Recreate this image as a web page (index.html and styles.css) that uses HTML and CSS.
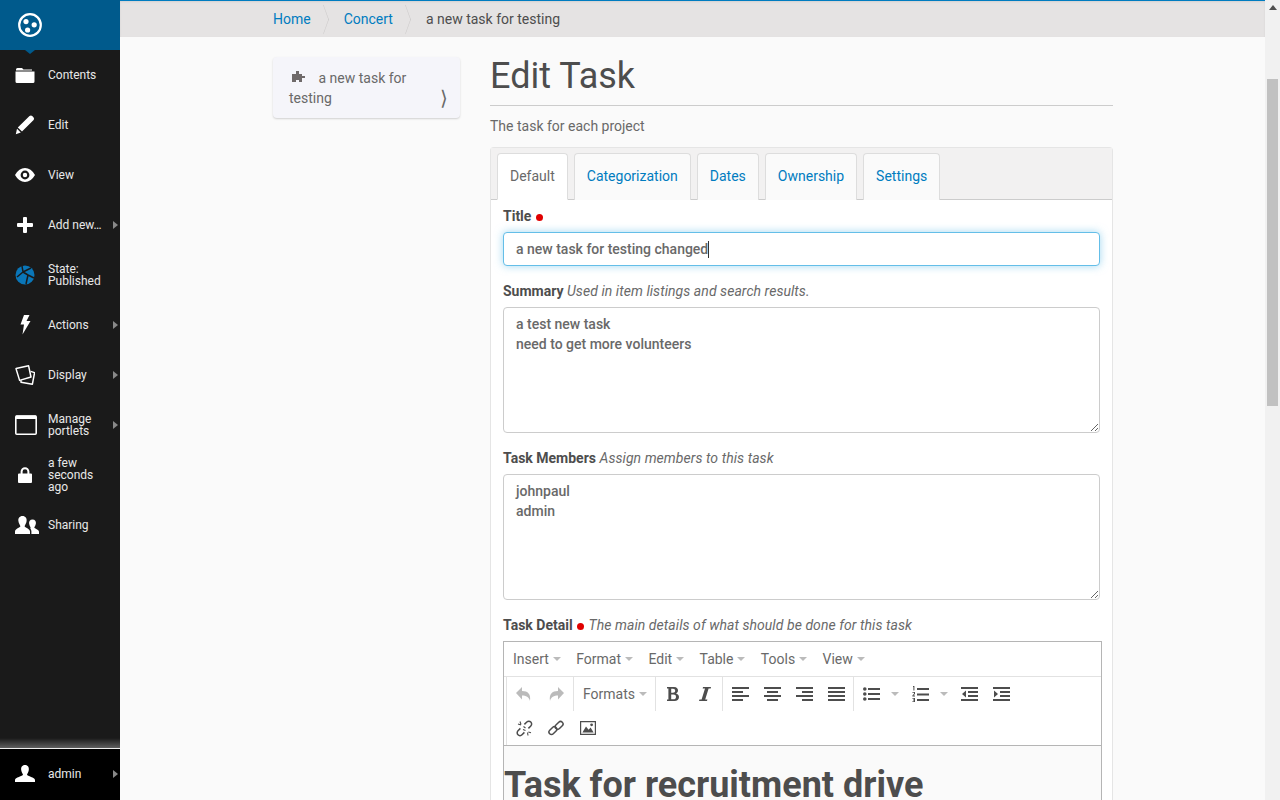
FILE: index.html

```html
<!DOCTYPE html>
<html lang="en">
<head>
    <meta charset="UTF-8">
    <meta name="viewport" content="width=device-width, initial-scale=1.0">
    <title>Edit Task</title>
    <link rel="stylesheet" href="styles.css">
</head>
<body>
    <!-- Toolbar -->
    <nav class="toolbar">
        <a class="logo" href="#">
            <svg width="24" height="24" viewBox="0 0 24 24"><circle cx="12" cy="12" r="10.8" fill="none" stroke="#fff" stroke-width="2.2"/><circle cx="8" cy="8.6" r="2.6" fill="#fff"/><circle cx="16.2" cy="11.8" r="2.6" fill="#fff"/><circle cx="9.6" cy="17" r="2.6" fill="#fff"/></svg>
        </a>
        <ul class="toolbar-items">
            <li><a href="#"><span class="tool-icon"><svg width="20" height="16" viewBox="0 0 20 16"><path d="M1 2.5 Q1 1 2.5 1 H7 L8.5 2.5 H17 V3.5 H1Z M0.5 4.6 H19.5 V14.5 Q19.5 16 18 16 H2 Q0.5 16 0.5 14.5Z" fill="#fff"/></svg></span><span class="tool-label">Contents</span></a></li>
            <li><a href="#"><span class="tool-icon"><svg width="20" height="20" viewBox="0 0 20 20"><path d="M14.5 1 Q16 0 17.5 1.2 L18.6 2.4 Q19.6 3.8 18.6 5 L7 16.6 2.8 12.6Z M2 13.8 L5.8 17.6 0.8 19.2Z" fill="#fff"/></svg></span><span class="tool-label">Edit</span></a></li>
            <li><a href="#"><span class="tool-icon"><svg width="20" height="14" viewBox="0 0 20 14"><path fill-rule="evenodd" d="M0 7 Q4 0 10 0 T20 7 Q16 14 10 14 T0 7Z M10 2.6 A4.4 4.4 0 1 0 10 11.4 A4.4 4.4 0 1 0 10 2.6Z M10 4.8 A2.2 2.2 0 1 1 10 9.2 A2.2 2.2 0 1 1 10 4.8Z" fill="#fff"/></svg></span><span class="tool-label">View</span></a></li>
            <li class="has-sub"><a href="#"><span class="tool-icon"><svg width="16" height="16" viewBox="0 0 16 16"><path d="M6 1 Q6 0 7 0 H9 Q10 0 10 1 V6 H15 Q16 6 16 7 V9 Q16 10 15 10 H10 V15 Q10 16 9 16 H7 Q6 16 6 15 V10 H1 Q0 10 0 9 V7 Q0 6 1 6 H6Z" fill="#fff"/></svg></span><span class="tool-label">Add new…</span></a></li>
            <li><a href="#"><span class="tool-icon"><svg width="20" height="20" viewBox="0 0 20 20"><circle cx="10" cy="10" r="9.5" fill="#0a76b8"/><path d="M7 1 L8 7 2 12 M8 7 L13 10 19 13 M13 10 L11 19 M8 7 L16 3" fill="none" stroke="#1a1a1a" stroke-width="1.5"/></svg></span><span class="tool-label">State:<br>Published</span></a></li>
            <li class="has-sub"><a href="#"><span class="tool-icon"><svg width="12" height="20" viewBox="0 0 12 20"><path d="M5 0 H10.5 L7.5 6 H11.5 L3.5 19.5 5 9.5 H1.5Z" fill="#fff"/></svg></span><span class="tool-label">Actions</span></a></li>
            <li class="has-sub"><a href="#"><span class="tool-icon"><svg width="20" height="20" viewBox="0 0 20 20"><path d="M1 3.6 L13.6 0.8 16 12 4.6 15.4Z" fill="none" stroke="#fff" stroke-width="1.5" stroke-linejoin="round"/><path d="M15.6 6.4 L19.6 7.6 17.4 19.2 6 17.2 6 15.2" fill="none" stroke="#fff" stroke-width="1.5" stroke-linejoin="round"/></svg></span><span class="tool-label">Display</span></a></li>
            <li class="has-sub"><a href="#"><span class="tool-icon icon-right"><svg width="22" height="20" viewBox="0 0 22 20"><rect x="0.8" y="1" width="20.4" height="18.2" rx="1" fill="none" stroke="#fff" stroke-width="1.6"/><rect x="0.8" y="0.5" width="20.4" height="3.5" fill="#fff"/></svg></span><span class="tool-label">Manage<br>portlets</span></a></li>
            <li><a href="#"><span class="tool-icon"><svg width="14" height="16" viewBox="0 0 14 16"><path fill-rule="evenodd" d="M2.6 6.5 V4.6 A4.4 4.4 0 0 1 11.4 4.6 V6.5 H13 Q14 6.5 14 7.5 V15 Q14 16 13 16 H1 Q0 16 0 15 V7.5 Q0 6.5 1 6.5Z M4.6 6.5 H9.4 V4.6 A2.4 2.4 0 0 0 4.6 4.6Z" fill="#fff"/></svg></span><span class="tool-label">a few<br>seconds<br>ago</span></a></li>
            <li><a href="#"><span class="tool-icon icon-right-2"><svg width="24" height="18" viewBox="0 0 24 18"><path d="M7.5 0 C10.5 0 12 2.4 11.6 5 C11.3 7.5 10 9 9.6 10.2 C9.8 11.6 15 12.6 15 15.5 V18 H0 V15.5 C0 12.6 5.2 11.6 5.4 10.2 C5 9 3.7 7.5 3.4 5 C3 2.4 4.5 0 7.5 0Z" fill="#fff"/><path d="M17.5 3.5 C20 3.5 21.2 5.5 20.9 7.5 C20.6 9.5 19.6 10.7 19.3 11.6 C19.5 12.8 24 13.5 24 15.8 V18 H16.4 V15.2 C16.4 13.4 14.6 12.4 15.6 11.6 C15.2 10.7 14.4 9.5 14.1 7.5 C13.8 5.5 15 3.5 17.5 3.5Z" fill="#fff"/></svg></span><span class="tool-label">Sharing</span></a></li>
        </ul>
        <a class="toolbar-user has-sub" href="#"><span class="tool-icon"><svg width="20" height="17" viewBox="0 0 20 17"><path d="M10 0 C13 0 14.2 2.4 13.8 5 C13.5 7.2 12.4 8.6 12 9.8 C12.2 11.2 20 12.4 20 15 V17 H0 V15 C0 12.4 7.8 11.2 8 9.8 C7.6 8.6 6.5 7.2 6.2 5 C5.8 2.4 7 0 10 0Z" fill="#fff"/></svg></span><span class="tool-label">admin</span></a>
    </nav>

    <div class="page">
        <!-- Breadcrumbs -->
        <div class="breadcrumbs">
            <ol class="container crumb-list">
                <li><a href="#">Home</a></li>
                <li><a href="#">Concert</a></li>
                <li>a new task for testing</li>
            </ol>
        </div>

        <div class="container columns">
            <aside class="nav-card">
                <svg class="puzzle" width="13" height="12" viewBox="0 0 13 12"><path d="M4 0 H7 V3 H10 V5 H13 V7 H10 V11 H7 V9 H4 V11 H0 V3 H4Z" fill="#6f6a6a"/></svg>
                <span>a new task for testing</span>
                <span class="nav-arrow">⟩</span>
            </aside>

            <main class="content">
                <h1>Edit Task</h1>
                <p class="lead">The task for each project</p>

                <form class="edit-form">
                    <div class="tabs">
                        <a class="tab active" href="#">Default</a>
                        <a class="tab" href="#">Categorization</a>
                        <a class="tab" href="#">Dates</a>
                        <a class="tab" href="#">Ownership</a>
                        <a class="tab" href="#">Settings</a>
                    </div>
                    <div class="fields">
                        <div class="field">
                            <label>Title <span class="required"></span></label>
                            <div class="text-input">a new task for testing changed<span class="caret"></span></div>
                        </div>
                        <div class="field">
                            <label>Summary <em>Used in item listings and search results.</em></label>
                            <textarea>a test new task
need to get more volunteers</textarea>
                        </div>
                        <div class="field">
                            <label>Task Members <em>Assign members to this task</em></label>
                            <textarea>johnpaul
admin</textarea>
                        </div>
                        <div class="field">
                            <label>Task Detail <span class="required"></span> <em>The main details of what should be done for this task</em></label>
                            <div class="editor">
                                <div class="menu-bar">
                                    <span class="menu">Insert</span>
                                    <span class="menu">Format</span>
                                    <span class="menu">Edit</span>
                                    <span class="menu">Table</span>
                                    <span class="menu">Tools</span>
                                    <span class="menu">View</span>
                                </div>
                                <div class="tool-bar">
                                    <div class="tool-row">
                                        <div class="tool-group">
                                            <span class="btn muted"><svg width="16" height="14" viewBox="0 0 16 14"><path d="M6 0 V4 C12 4 15 7 14 14 C13 10 10 8.5 6 8.5 V12.5 L0 6Z"/></svg></span>
                                            <span class="btn muted"><svg width="16" height="14" viewBox="0 0 16 14"><path d="M10 0 V4 C4 4 1 7 2 14 C3 10 6 8.5 10 8.5 V12.5 L16 6Z"/></svg></span>
                                        </div>
                                        <div class="tool-group">
                                            <span class="formats menu">Formats</span>
                                        </div>
                                        <div class="tool-group">
                                            <span class="btn"><svg width="12" height="14" viewBox="0 0 12 14"><path fill-rule="evenodd" d="M0 0 H7 C10 0 11 2 11 3.6 C11 5 10.2 6 9 6.6 C10.6 7.1 12 8.2 12 10 C12 12.4 10 14 7.5 14 H0 V12.6 H1.4 V1.4 H0Z M4.2 1.8 V5.8 H6 C7.4 5.8 8.2 5 8.2 3.8 C8.2 2.6 7.4 1.8 6 1.8Z M4.2 7.6 V12.2 H6.4 C8 12.2 9 11.4 9 9.9 C9 8.4 8 7.6 6.4 7.6Z"/></svg></span>
                                            <span class="btn"><svg width="12" height="14" viewBox="0 0 12 14"><path d="M4 0 H12 L11.7 1.4 H9.6 L6.2 12.6 H8.4 L8 14 H0 L0.4 12.6 H2.6 L6 1.4 H3.7Z"/></svg></span>
                                        </div>
                                        <div class="tool-group">
                                            <span class="btn"><svg width="17" height="14" viewBox="0 0 17 14"><path d="M0 0 H17 V2 H0Z M0 4 H11 V6 H0Z M0 8 H17 V10 H0Z M0 12 H11 V14 H0Z"/></svg></span>
                                            <span class="btn"><svg width="17" height="14" viewBox="0 0 17 14"><path d="M0 0 H17 V2 H0Z M3 4 H14 V6 H3Z M0 8 H17 V10 H0Z M3 12 H14 V14 H3Z"/></svg></span>
                                            <span class="btn"><svg width="17" height="14" viewBox="0 0 17 14"><path d="M0 0 H17 V2 H0Z M6 4 H17 V6 H6Z M0 8 H17 V10 H0Z M6 12 H17 V14 H6Z"/></svg></span>
                                            <span class="btn"><svg width="17" height="14" viewBox="0 0 17 14"><path d="M0 0 H17 V2 H0Z M0 4 H17 V6 H0Z M0 8 H17 V10 H0Z M0 12 H17 V14 H0Z"/></svg></span>
                                        </div>
                                        <div class="tool-group">
                                            <span class="btn split"><svg width="17" height="14" viewBox="0 0 17 14"><path d="M5 1 H17 V3 H5Z M5 6 H17 V8 H5Z M5 11 H17 V13 H5Z"/><circle cx="1.8" cy="2" r="1.8"/><circle cx="1.8" cy="7" r="1.8"/><circle cx="1.8" cy="12" r="1.8"/></svg></span>
                                            <span class="btn split"><svg width="17" height="16" viewBox="0 0 17 16"><path d="M5 2 H17 V4 H5Z M5 7.5 H17 V9.5 H5Z M5 13 H17 V15 H5Z M1 0 H2.4 V4.4 H1.4 V1 H1Z M0.4 6 H3 V8 L1.4 9.6 H3 V10.4 H0.4 V9.4 L2 7.8 V6.8 H0.4Z M0.4 12 H3 V16 H0.4 V15.2 H2 V14.4 H1 V13.6 H2 V12.8 H0.4Z"/></svg></span>
                                            <span class="btn"><svg width="17" height="14" viewBox="0 0 17 14"><path d="M0 0 H17 V2 H0Z M7 4 H17 V6 H7Z M7 8 H17 V10 H7Z M0 12 H17 V14 H0Z M5 3.6 V10.4 L1 7Z"/></svg></span>
                                            <span class="btn"><svg width="17" height="14" viewBox="0 0 17 14"><path d="M0 0 H17 V2 H0Z M7 4 H17 V6 H7Z M7 8 H17 V10 H7Z M0 12 H17 V14 H0Z M1 3.6 V10.4 L5 7Z"/></svg></span>
                                        </div>
                                    </div>
                                    <div class="tool-row">
                                        <div class="tool-group">
                                            <span class="btn"><svg width="17" height="17" viewBox="0 0 17 17" fill="none" stroke="#4d4d4d"><g stroke-width="1.5"><path d="M8.4 4.4 L10.8 2 A2.6 2.6 0 0 1 14.8 6 L12.4 8.4"/><path d="M8.4 12.4 L6 14.8 A2.6 2.6 0 0 1 2 10.8 L4.4 8.4"/></g><path stroke-width="1.1" d="M2 4 L5 5 M4 1.5 L5 4.5 M12 15.5 L11.5 12.5 M15 12.8 L12.3 12 M7.5 6.5 L9.5 8 M7 9.5 L9.5 10.5"/></svg></span>
                                            <span class="btn"><svg width="16" height="16" viewBox="0 0 16 16" fill="none" stroke="#4d4d4d" stroke-width="1.5"><rect x="6.6" y="2.9" width="9" height="5" rx="2.5" transform="rotate(-45 11.1 5.4)"/><rect x="0.4" y="8.1" width="9" height="5" rx="2.5" transform="rotate(-45 4.9 10.6)"/></svg></span>
                                            <span class="btn"><svg width="16" height="14" viewBox="0 0 16 14"><path fill-rule="evenodd" d="M0 0 H16 V14 H0Z M1.2 1.2 V12.8 H14.8 V1.2Z"/><path d="M2.4 11.6 L6 5.4 8.6 8.8 10.6 6.6 13.6 11.6Z"/><circle cx="11.6" cy="3.8" r="1.4"/></svg></span>
                                        </div>
                                    </div>
                                </div>
                                <div class="editor-body">
                                    <h2>Task for recruitment drive</h2>
                                </div>
                            </div>
                        </div>
                    </div>
                </form>
            </main>
        </div>
    </div>

    <!-- Window scrollbar -->
    <div class="scrollbar">
        <span class="scroll-up"></span>
        <span class="scroll-thumb"></span>
    </div>
</body>
</html>
```

FILE: styles.css

```css
/* General Styles */
* {
    box-sizing: border-box;
}

html, body {
    height: 100%;
}

body {
    display: flex;
    margin: 0;
    overflow: hidden;
    background: #fafafa;
    color: #4d4d4d;
    font-family: Roboto, "Liberation Sans", sans-serif;
    font-size: 14px;
    line-height: 20px;
}

a {
    color: #007cc0;
    text-decoration: none;
}

/* Toolbar */
.toolbar {
    display: flex;
    flex-direction: column;
    flex: 0 0 120px;
    height: 800px;
    background: #1a1a1a;
    font-size: 12px;
    line-height: 12px;
}

.toolbar a {
    color: #e8e8e8;
}

.logo {
    position: relative;
    display: flex;
    align-items: center;
    flex: 0 0 50px;
    padding-left: 18px;
    background: #005a8c;
}

.logo::after {
    content: "";
    position: absolute;
    left: 25px;
    bottom: -4px;
    border-top: 4px solid #005a8c;
    border-left: 5px solid transparent;
    border-right: 5px solid transparent;
}

.toolbar-items {
    flex: 1;
    margin: 0;
    padding: 0;
    list-style: none;
}

.toolbar-items a, .toolbar-user {
    position: relative;
    display: flex;
    align-items: center;
    height: 50px;
}

.tool-icon {
    display: flex;
    justify-content: center;
    flex: 0 0 48px;
    padding-left: 2px;
}

.icon-right {
    padding-left: 4px;
}

.icon-right-2 {
    padding-left: 6px;
}

.tool-label {
    flex: 1;
    padding-right: 12px;
}

.has-sub > a::after, .toolbar-user::after {
    content: "";
    position: absolute;
    right: 2px;
    top: 21px;
    border-left: 5px solid #888;
    border-top: 4px solid transparent;
    border-bottom: 4px solid transparent;
}

.toolbar-user {
    flex: 0 0 52px;
    height: 52px;
    padding-bottom: 2px;
    background: #000;
    border-top: 1px solid #eee;
}

.toolbar-user::before {
    content: "";
    position: absolute;
    left: 0;
    right: 0;
    top: -11px;
    height: 10px;
    background: linear-gradient(rgba(255, 255, 255, 0), rgba(255, 255, 255, 0.3));
}

/* Breadcrumbs */
.page {
    flex: 1;
    min-width: 0;
}

.container {
    width: 870px;
    margin-left: 138px;
    padding: 0 15px;
}

.breadcrumbs {
    height: 37px;
    overflow: hidden;
    background: #e5e3e3;
    border-top: 1px solid #007cc0;
    box-shadow: inset 0 1px 2px rgba(0, 0, 0, 0.08);
}

.crumb-list {
    display: flex;
    align-items: center;
    height: 36px;
    margin-top: 0;
    margin-bottom: 0;
    list-style: none;
}

.crumb-list li {
    position: relative;
    padding-right: 33px;
}

.crumb-list li + li::before {
    content: "";
    position: absolute;
    left: -31px;
    top: 0;
    width: 20px;
    height: 20px;
    border-top: 1px solid #c9c7c7;
    border-right: 1px solid #c9c7c7;
    transform: scaleX(0.36) rotate(45deg);
}

/* Columns */
.columns {
    display: flex;
    gap: 30px;
}

.nav-card {
    position: relative;
    flex: 0 0 187px;
    height: 61px;
    margin-top: 20px;
    padding: 11px 16px;
    background: #f5f5fa;
    border-radius: 4px;
    box-shadow: 0 1px 2px rgba(0, 0, 0, 0.17);
    color: #696969;
}

.puzzle {
    margin: 0 10px 0 3px;
}

.nav-arrow {
    position: absolute;
    right: 12px;
    bottom: 10px;
    font-size: 20px;
    line-height: 20px;
}

.content {
    flex: 0 0 623px;
    min-width: 0;
}

h1 {
    height: 50px;
    margin: 19px 0 0;
    border-bottom: 1px solid #ccc;
    font-size: 36px;
    font-weight: 400;
    line-height: 40px;
}

.lead {
    margin: 10px 0 11px;
    color: #696969;
}

/* Tabs */
.edit-form {
    background: #fff;
    border: 1px solid #e5e5e5;
    border-bottom: 0;
    border-radius: 4px 4px 0 0;
}

.tabs {
    display: flex;
    gap: 6px;
    height: 52px;
    padding: 5px 6px 0;
    background: #f2f1f1;
    border-bottom: 1px solid #ccc;
}

.tab {
    height: 47px;
    padding: 12px 12px 0;
    background: #fafafa;
    border: 1px solid #ddd;
    border-bottom: 0;
    border-radius: 4px 4px 0 0;
}

.tab.active {
    background: #fff;
    border-bottom: 1px solid #fff;
    color: #696969;
}

/* Fields */
.fields {
    padding: 6px 12px 0;
}

.field {
    margin-bottom: 15px;
}

label {
    display: block;
    margin-bottom: 6px;
    font-weight: 700;
}

label em {
    color: #696969;
    font-weight: 400;
    letter-spacing: 0.06px;
}

.required {
    display: inline-block;
    width: 7px;
    height: 7px;
    margin: 0 1px 0 1px;
    background: #e00000;
    border-radius: 50%;
}

.text-input {
    height: 34px;
    padding: 6px 12px;
    background: #fff;
    border: 1px solid #64bee8;
    border-radius: 4px;
    box-shadow: 0 0 8px rgba(100, 190, 232, 0.6);
    color: #696969;
    font-weight: 500;
}

.caret {
    display: inline-block;
    width: 1px;
    height: 17px;
    vertical-align: -4px;
    background: #333;
}

textarea {
    display: block;
    width: 100%;
    height: 126px;
    padding: 6px 12px;
    background: #fff;
    border: 1px solid #ccc;
    border-radius: 4px;
    color: #696969;
    font: 500 14px/20px Roboto, "Liberation Sans", sans-serif;
}

/* Rich text editor */
.editor {
    width: 599px;
    border: 1px solid #b5b5b5;
    border-bottom: 0;
    margin-top: 6px;
}

.menu-bar {
    display: flex;
    align-items: center;
    gap: 15.4px;
    height: 35px;
    padding-left: 9px;
    border-bottom: 1px solid #e2e2e2;
}

.menu {
    display: flex;
    align-items: center;
    gap: 4px;
    color: #696969;
}

.menu::after {
    content: "";
    border-top: 4px solid #bbb;
    border-left: 4px solid transparent;
    border-right: 4px solid transparent;
}

.tool-bar {
    height: 69px;
    padding-left: 2px;
    border-bottom: 1px solid #b5b5b5;
}

.tool-row {
    display: flex;
}

.tool-group {
    display: flex;
    align-items: center;
    height: 34px;
    padding: 0 1px;
    border-left: 1px solid #e2e2e2;
}

.btn {
    display: flex;
    align-items: center;
    justify-content: center;
    width: 32px;
    height: 34px;
    fill: #4d4d4d;
}

.btn.muted {
    fill: #bbb;
}

.btn.split {
    position: relative;
    width: 49px;
    justify-content: flex-start;
    padding-left: 8px;
}

.btn.split::after {
    content: "";
    position: absolute;
    right: 5px;
    top: 15px;
    border-top: 4px solid #bbb;
    border-left: 4px solid transparent;
    border-right: 4px solid transparent;
}

.formats {
    padding: 0 7px 0 8px;
}

.editor-body {
    height: 60px;
    background: #fafafa;
    padding: 0;
    overflow: hidden;
}

.editor-body h2 {
    margin: 19px 0 0;
    font-size: 36px;
    font-weight: 700;
    line-height: 40px;
}

/* Window scrollbar */
.scrollbar {
    display: flex;
    flex-direction: column;
    align-items: center;
    flex: 0 0 15px;
    height: 800px;
    background: #f1f1f1;
}

.scroll-up {
    margin-top: 5px;
    border-bottom: 5px solid #505050;
    border-left: 4px solid transparent;
    border-right: 4px solid transparent;
}

.scroll-thumb {
    width: 11px;
    height: 327px;
    margin-top: 69px;
    background: #c1c1c1;
}
```
